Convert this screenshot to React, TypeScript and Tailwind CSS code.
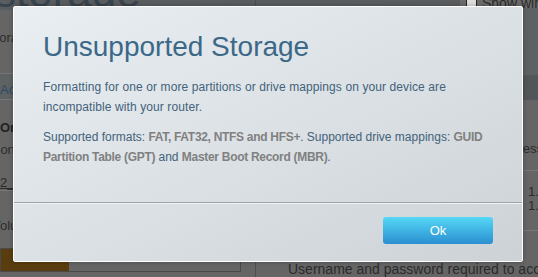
import React from 'react';

const font = { fontFamily: '"Liberation Sans", Arial, sans-serif' };

function Backdrop() {
  return (
    <div className="flex h-full w-full flex-col bg-[#656565] text-[13px] text-[#2a2a2a]">
      <div className="flex flex-1">
        {/* left column of the page behind the dialog */}
        <div className="flex w-[256px] flex-col overflow-hidden border-r border-[#4e4e4e]">
          <div className="h-[10px] overflow-hidden bg-[#5a5d5f]">
            <div className="-ml-[6px] -mt-[30px] text-[44px] leading-none whitespace-nowrap text-[#38444e]">storage</div>
          </div>
          <div className="h-[63px] -ml-[13px] pt-[18px] whitespace-nowrap text-[#2e2e2e]">Storage information</div>
          <div className="h-[27px] border-y border-[#777] bg-[#5f6263] pt-[6px] text-[#2c4c66]">Access</div>
          <div className="pt-[18px] font-bold text-[#222]">Original</div>
          <div className="-ml-[9px] pt-[2px] text-[#2e2e2e]">Condition</div>
          <div className="mt-[14px] h-[18px] border-b border-[#777] underline">2_drive</div>
          <div className="-ml-[8px] pt-[25px] text-[#2e2e2e]">Volume</div>
          <div className="mt-auto mb-[5px] flex h-[24px] w-[241px] border border-[#4a4a4a]">
            <div className="w-[68px] bg-[#5a3d0e]" />
          </div>
        </div>
        {/* right column */}
        <div className="flex flex-1 flex-col overflow-hidden">
          <div className="flex h-[8px] overflow-hidden bg-[#5a5d5f]">
            <div className="-mt-[4px] ml-[204px] flex flex-1 items-start gap-[5px] bg-[#6b6b6b] pl-[6px]">
              <div className="mt-[1px] h-[11px] w-[11px] shrink-0 border border-[#222] bg-[#ddd]" />
              <span className="text-[14px] leading-none whitespace-nowrap">Show wireless</span>
            </div>
          </div>
          <div className="h-[67px] bg-[#5e6163]" />
          <div className="h-[25px] bg-[#535658]" />
          <div className="flex h-[70px] items-end justify-end pb-[12px]">
            <span className="-mr-[5px] whitespace-nowrap">access</span>
          </div>
          <div className="flex h-[60px] flex-col items-end border-t border-[#777] pt-[14px] leading-[14px]">
            <span className="-mr-[8px]">1.1</span>
            <span className="-mr-[8px]">1.1</span>
          </div>
          <div className="border-t border-[#777]" />
          <div className="mt-auto pb-[1px] pl-[32px] text-[14px] leading-none whitespace-nowrap">
            Username and password required to access
          </div>
        </div>
      </div>
    </div>
  );
}

export default function App() {
  const strong = 'font-bold tracking-[-0.3px] text-[#808080]';
  return (
    <div className="relative h-[277px] w-[538px] overflow-hidden" style={font}>
      <Backdrop />
      <div className="absolute left-[13px] top-[6px] flex h-[256px] w-[510px] flex-col rounded-[2px] border border-white bg-gradient-to-br from-[#e8eef2] via-[#dbe1e5] to-[#ccd2d6] shadow-[0_0_4px_rgba(0,0,0,0.3)]">
        <div className="h-[195px] px-[29px] pt-[26px]">
          <h1 className="text-[28px] leading-none text-[#3c6887]">Unsupported Storage</h1>
          <div className="text-[12px] leading-[20px] text-[#44627a]">
            <p className="mt-[16px] tracking-[0.1px]">
              Formatting for one or more partitions or drive mappings on your device are incompatible with your router.
            </p>
            <p className="mt-[10px]">
              Supported formats: <span className={strong}>FAT, FAT32, NTFS and HFS+</span>. Supported drive mappings:{' '}
              <span className={strong}>GUID Partition Table (GPT)</span> and{' '}
              <span className={strong}>Master Boot Record (MBR)</span>.
            </p>
          </div>
        </div>
        <div className="border-t border-[#9ba5ad]" />
        <div className="flex flex-1 items-start justify-end border-t border-[#eef2f4] px-[29px] pt-[13px]">
          <button
            type="button"
            className="h-[27px] w-[110px] rounded-[3px] bg-gradient-to-b from-[#56d8f6] to-[#2b8fd0] text-[13px] text-white"
          >
            Ok
          </button>
        </div>
      </div>
    </div>
  );
}
